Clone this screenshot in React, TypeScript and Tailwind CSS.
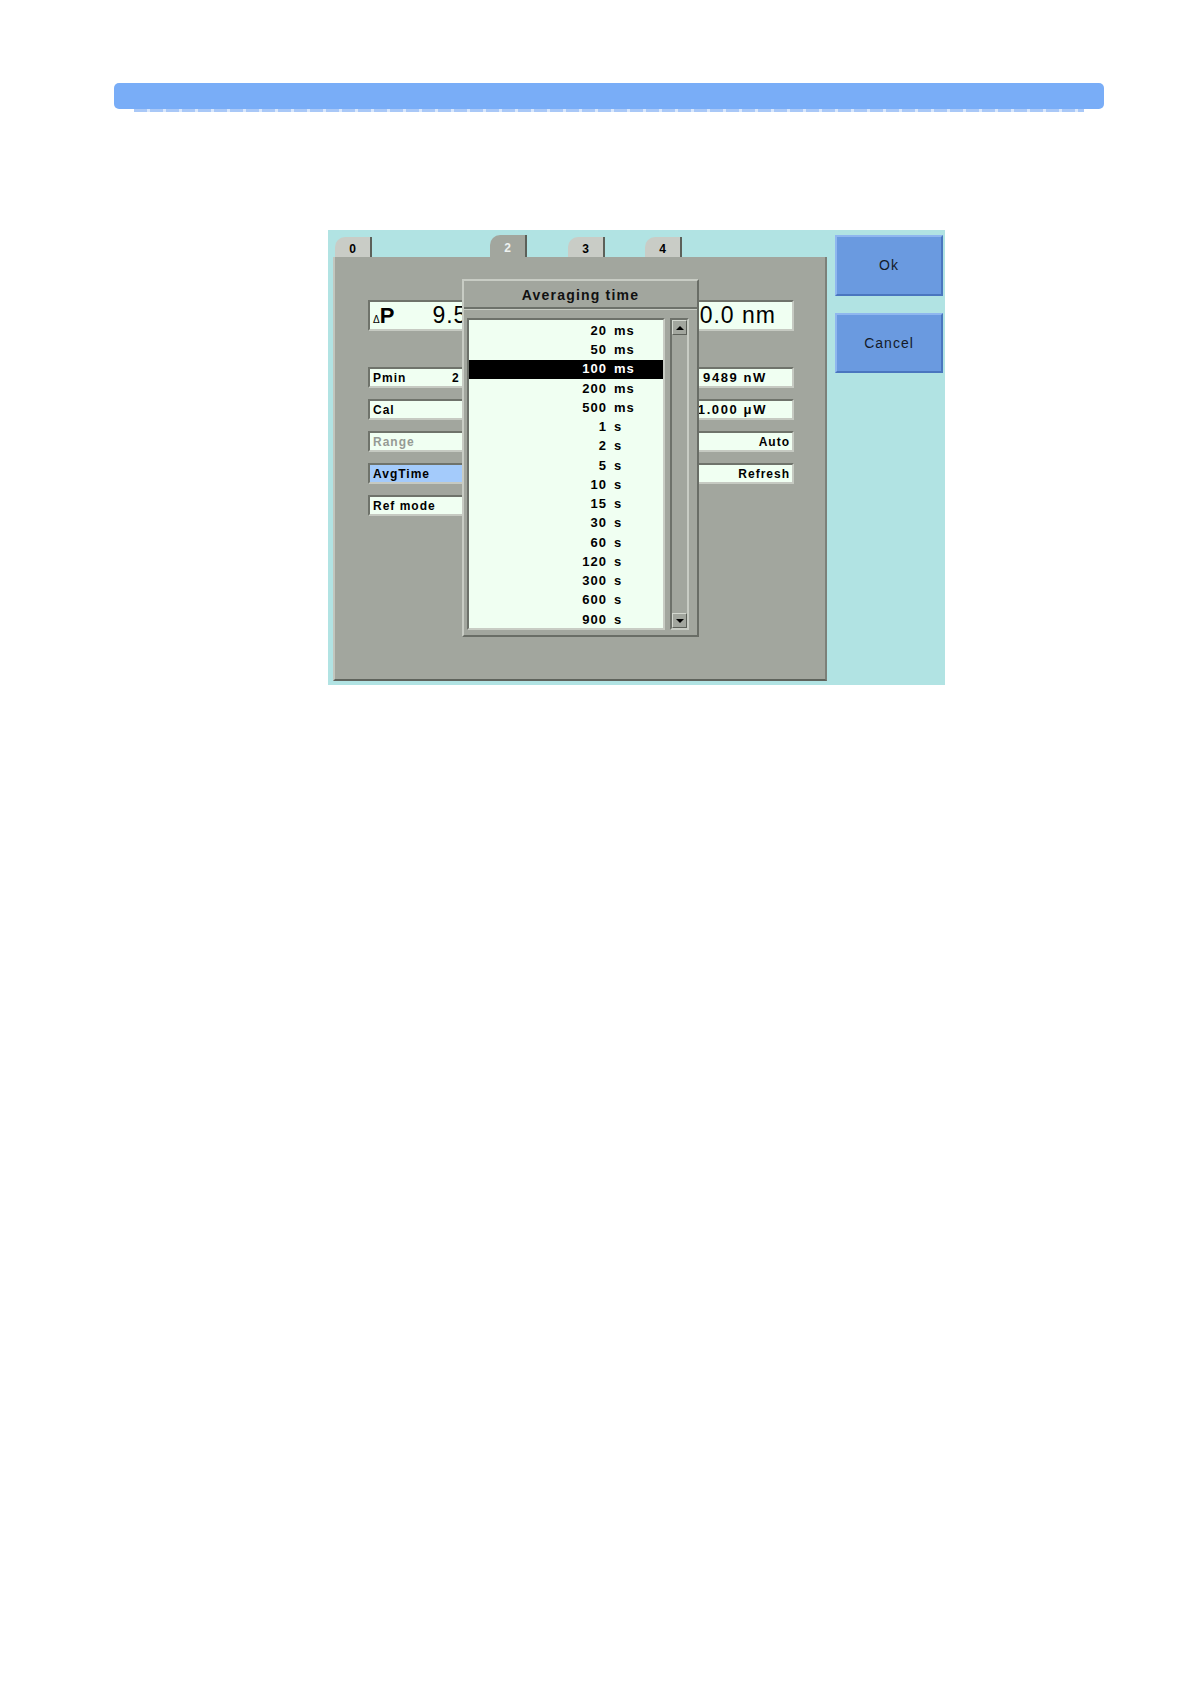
import type { ReactNode } from "react";

const items = [
  ["20", "ms"],
  ["50", "ms"],
  ["100", "ms"],
  ["200", "ms"],
  ["500", "ms"],
  ["1", "s"],
  ["2", "s"],
  ["5", "s"],
  ["10", "s"],
  ["15", "s"],
  ["30", "s"],
  ["60", "s"],
  ["120", "s"],
  ["300", "s"],
  ["600", "s"],
  ["900", "s"],
];

function Field({ children, className = "" }: { children: ReactNode; className?: string }) {
  return (
    <div
      className={`flex items-center border-2 border-t-[#6f736b] border-l-[#6f736b] border-b-[#c6cac2] border-r-[#c6cac2] overflow-hidden whitespace-nowrap ${className}`}
    >
      {children}
    </div>
  );
}

function Tab({ label, active = false, className = "" }: { label: string; active?: boolean; className?: string }) {
  return (
    <div
      className={`flex items-center justify-center w-[37px] rounded-tl-[10px] border-r-2 border-[#5c6059] text-[12px] font-bold pt-[4px] ${
        active ? "h-[22px] bg-[#a2a69e] text-[#eef2f0]" : "h-[20px] bg-[#c9ccc6] text-black"
      } ${className}`}
    >
      {label}
    </div>
  );
}

export default function App() {
  return (
    <div className="w-[1190px] h-[1682px] bg-white pt-[83px] pl-[114px] pr-[86px]" style={{ fontFamily: '"Liberation Sans", Arial, sans-serif' }}>
      {/* top bar */}
      <div className="h-[26px] rounded-[5px] bg-[#79adf7]" />
      <div className="mx-[20px] h-[3px] bg-[repeating-linear-gradient(90deg,#a9c8f7_0_13px,#d9e7fb_13px_16px)]" />

      {/* device screen */}
      <div className="mt-[118px] ml-[214px] w-[617px] h-[455px] bg-[#b1e3e3] flex pt-[5px] pl-[5px]">
        <div className="w-[494px] flex flex-col">
          <div className="flex items-end h-[22px]">
            <Tab label="0" className="ml-[2px]" />
            <Tab label="2" active className="ml-[118px]" />
            <Tab label="3" className="ml-[41px]" />
            <Tab label="4" className="ml-[40px]" />
          </div>

          <div className="relative h-[424px] bg-[#a2a69e] border-l-2 border-l-[#c2c6be] border-b-2 border-b-[#5f635c] border-r-2 border-r-[#7c8079] pt-[43px] pl-[33px]">
            <div className="grid grid-cols-[232px_190px] gap-x-[4px] text-black">
              <Field className="h-[31px] bg-[#f0fff2] px-[3px]">
                <span className="text-[10px] mt-[8px]">Δ</span>
                <span className="text-[22px] font-bold">P</span>
                <span className="ml-[38px] text-[23px] tracking-[1px]">9.5238 dB</span>
              </Field>
              <Field className="h-[31px] bg-[#f0fff2] justify-end pr-[16px]">
                <span className="text-[23px] tracking-[1px]">1550.0 nm</span>
              </Field>
            </div>

            <div className="mt-[36px] grid grid-cols-[232px_190px] gap-x-[4px] gap-y-[11px] text-[12px] font-bold tracking-[1px] text-black">
              <Field className="h-[21px] bg-[#f0fff2] px-[3px]">
                <span className="w-[79px]">Pmin</span>
                <span>2</span>
              </Field>
              <Field className="h-[21px] bg-[#f0fff2] justify-end pr-[25px] text-[13px] tracking-[1.6px]">9489 nW</Field>

              <Field className="h-[21px] bg-[#f0fff2] px-[3px]">Cal</Field>
              <Field className="h-[21px] bg-[#f0fff2] justify-end pr-[25px] text-[13px] tracking-[1.6px]">1.000 μW</Field>

              <Field className="h-[21px] bg-[#f0fff2] px-[3px] text-[#959a94]">Range</Field>
              <Field className="h-[21px] bg-[#f0fff2] justify-end pr-[2px]">Auto</Field>

              <Field className="h-[21px] bg-[#a4cbfb] px-[3px]">AvgTime</Field>
              <Field className="h-[21px] bg-[#f0fff2] justify-end pr-[2px]">Refresh</Field>

              <Field className="h-[21px] bg-[#f0fff2] px-[3px]">Ref mode</Field>
            </div>

            {/* popup list */}
            <div className="absolute left-[127px] top-[22px] w-[237px] h-[358px] bg-[#a2a69e] border-2 border-t-[#c8ccc4] border-l-[#c8ccc4] border-b-[#696d66] border-r-[#696d66] flex flex-col">
              <div className="h-[28px] pt-[3px] flex items-center justify-center text-[14px] font-bold tracking-[1.2px] text-[#111] border-b-2 border-b-[#6d716a]">
                Averaging time
              </div>
              <div className="h-px bg-[#c8ccc4]" />
              <div className="flex mt-[8px] ml-[3px]">
                <div className="border-2 border-t-[#6d716a] border-l-[#6d716a] border-b-[#c8ccc4] border-r-[#c8ccc4]">
                  <div className="w-[194px] h-[308px] bg-[#f0fff2] flex flex-col pt-px text-[13px] font-bold tracking-[1px] text-black">
                    {items.map(([n, u]) => (
                      <div
                        key={n + u}
                        className={`h-[19.25px] flex items-center ${n === "100" ? "bg-black text-white" : ""}`}
                      >
                        <span className="w-[138px] text-right">{n}</span>
                        <span className="ml-[7px]">{u}</span>
                      </div>
                    ))}
                  </div>
                </div>
                <div className="ml-[5px] w-[19px] h-[312px] border-2 border-t-[#6d716a] border-l-[#6d716a] border-b-[#c8ccc4] border-r-[#c8ccc4] flex flex-col justify-between bg-[#a2a69e]">
                  <div className="h-[15px] border border-t-[#d4d8d0] border-l-[#d4d8d0] border-b-[#5c6059] border-r-[#5c6059] flex items-center justify-center">
                    <div className="w-0 h-0 border-l-[4px] border-r-[4px] border-b-[4px] border-l-transparent border-r-transparent border-b-black" />
                  </div>
                  <div className="h-[15px] border border-t-[#d4d8d0] border-l-[#d4d8d0] border-b-[#5c6059] border-r-[#5c6059] flex items-center justify-center">
                    <div className="w-0 h-0 border-l-[4px] border-r-[4px] border-t-[4px] border-l-transparent border-r-transparent border-t-black" />
                  </div>
                </div>
              </div>
            </div>
          </div>
        </div>

        {/* side buttons */}
        <div className="ml-[8px] flex flex-col gap-[17px] text-[14px] tracking-[1px] text-[#141a28]">
          <div className="w-[108px] h-[61px] bg-[#6a9ae0] border-2 border-t-[#8fb7ef] border-l-[#8fb7ef] border-b-[#4a76bf] border-r-[#4a76bf] flex items-center justify-center">
            Ok
          </div>
          <div className="w-[108px] h-[60px] bg-[#6a9ae0] border-2 border-t-[#8fb7ef] border-l-[#8fb7ef] border-b-[#4a76bf] border-r-[#4a76bf] flex items-center justify-center">
            Cancel
          </div>
        </div>
      </div>
    </div>
  );
}
